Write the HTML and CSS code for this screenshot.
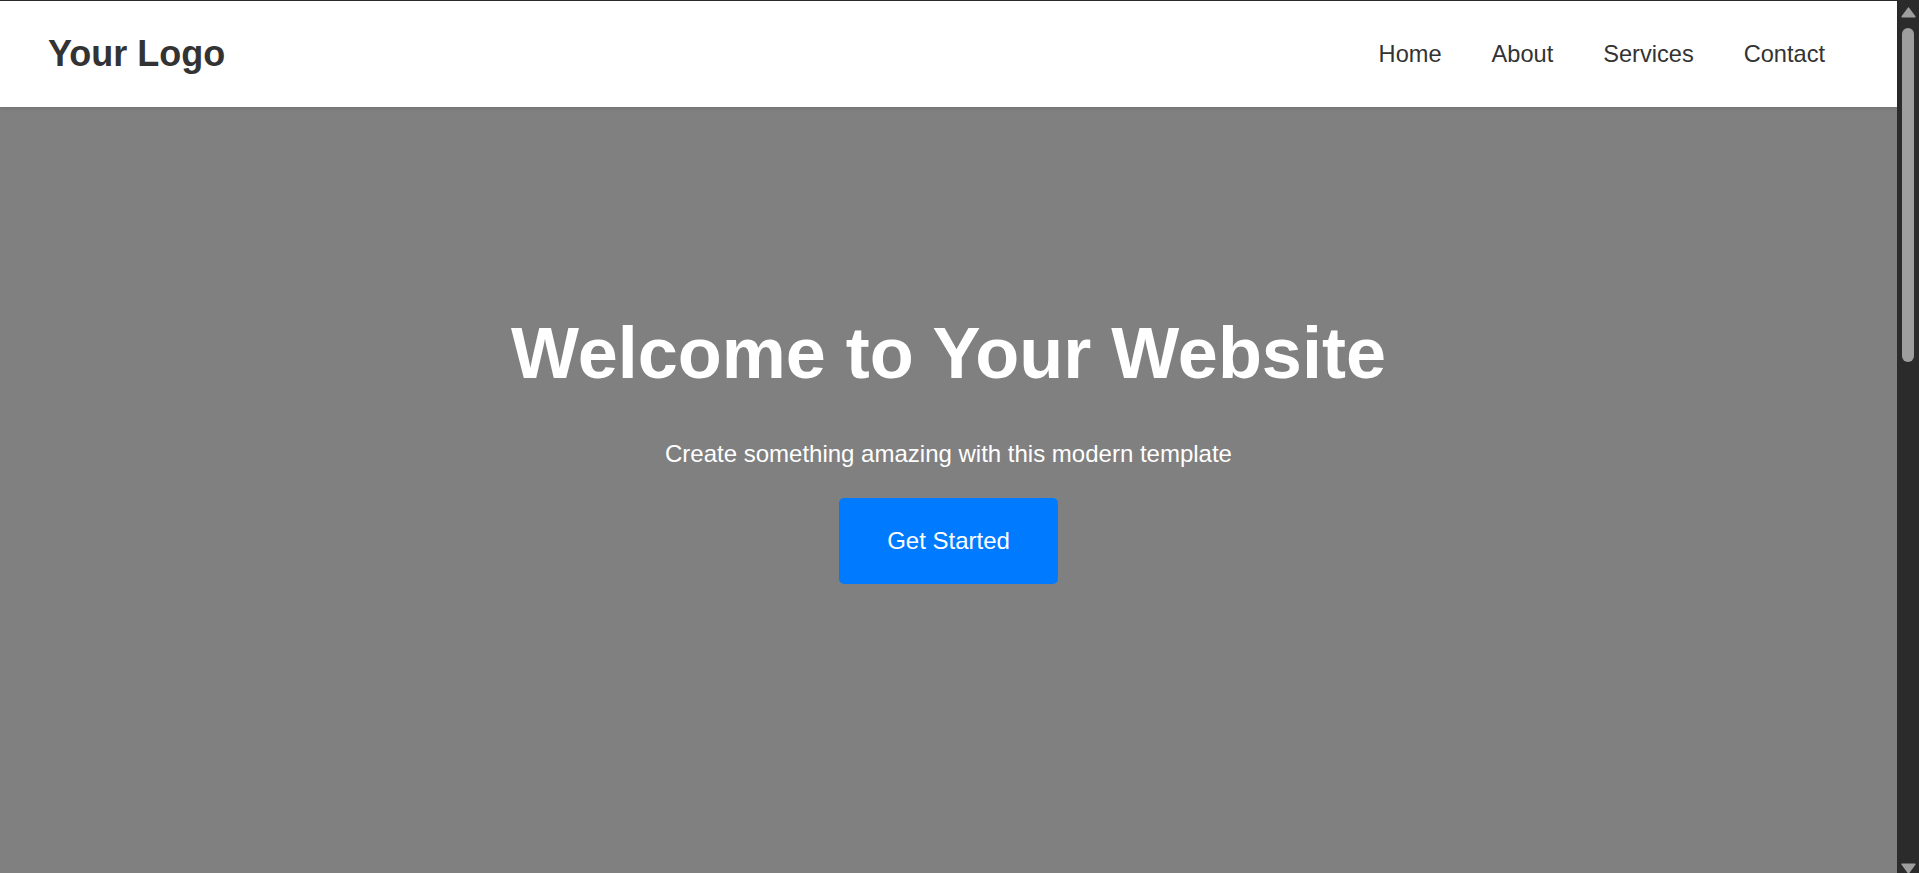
FILE: index.html
```html
<!DOCTYPE html>
<html lang="en">
<head>
<meta charset="utf-8">
<title>Your Website</title>
<link rel="stylesheet" href="styles.css">
</head>
<body>
<div class="window">
  <div class="page">
    <header class="site-header">
      <div class="logo">Your Logo</div>
      <nav class="nav">
        <a href="#" class="nav-link">Home</a>
        <a href="#" class="nav-link">About</a>
        <a href="#" class="nav-link">Services</a>
        <a href="#" class="nav-link">Contact</a>
      </nav>
    </header>
    <section class="hero">
      <h1 class="hero-title">Welcome to Your Website</h1>
      <p class="hero-sub">Create something amazing with this modern template</p>
      <a href="#" class="hero-btn">Get Started</a>
    </section>
  </div>
  <div class="scrollbar">
    <svg class="sb-arrow sb-up" width="15" height="11" viewBox="0 0 15 11"><polygon points="7.5,1.2 13.8,9.8 1.2,9.8" fill="#9e9e9e" stroke="#9e9e9e" stroke-width="1.6" stroke-linejoin="round"/></svg>
    <div class="sb-thumb"></div>
    <div class="sb-space"></div>
    <svg class="sb-arrow sb-down" width="15" height="11" viewBox="0 0 15 11"><polygon points="1.2,1.2 13.8,1.2 7.5,9.8" fill="#9e9e9e" stroke="#9e9e9e" stroke-width="1.6" stroke-linejoin="round"/></svg>
  </div>
</div>
</body>
</html>
```

FILE: styles.css
```css
html, body {
  margin: 0;
  padding: 0;
  height: 100%;
  overflow: hidden;
}

body {
  font-family: "Liberation Sans", Arial, sans-serif;
  background: #2b2b2b;
}

.window {
  display: flex;
  height: 100vh;
  box-sizing: border-box;
  border-top: 1px solid #2b2b2b;
}

.page {
  flex: 1;
  display: flex;
  flex-direction: column;
  min-width: 0;
}

.site-header {
  height: 106px;
  flex: none;
  display: flex;
  align-items: center;
  justify-content: space-between;
  padding: 0 72px 0 48px;
  background: #ffffff;
  box-shadow: 0 1px 4px rgba(0, 0, 0, 0.12);
  position: relative;
  z-index: 1;
}

.logo {
  font-size: 36px;
  font-weight: bold;
  color: #333333;
}

.nav {
  display: flex;
  gap: 50px;
}

.nav-link {
  font-size: 23.6px;
  color: #333333;
  text-decoration: none;
}

.hero {
  flex: 1;
  background: #808080;
  display: flex;
  flex-direction: column;
  align-items: center;
  padding-top: 205px;
  text-align: center;
}

.hero-title {
  margin: 0;
  font-size: 72px;
  font-weight: bold;
  color: #ffffff;
}

.hero-sub {
  margin: 46px 0 0;
  font-size: 24px;
  color: #ffffff;
}

.hero-btn {
  margin-top: 30px;
  display: inline-block;
  padding: 29px 48px;
  background: #007bff;
  color: #ffffff;
  font-size: 24px;
  text-decoration: none;
  border-radius: 5px;
}

.scrollbar {
  width: 22px;
  flex: none;
  background: #2b2b2b;
  display: flex;
  flex-direction: column;
  align-items: center;
}

.sb-arrow {
  display: block;
  flex: none;
}

.sb-up {
  margin-top: 6px;
}

.sb-thumb {
  margin-top: 10px;
  width: 12px;
  height: 334px;
  border-radius: 6px;
  background: #9e9e9e;
  flex: none;
}

.sb-space {
  flex: 1;
}

.sb-down {
  margin-bottom: -1px;
}
```
